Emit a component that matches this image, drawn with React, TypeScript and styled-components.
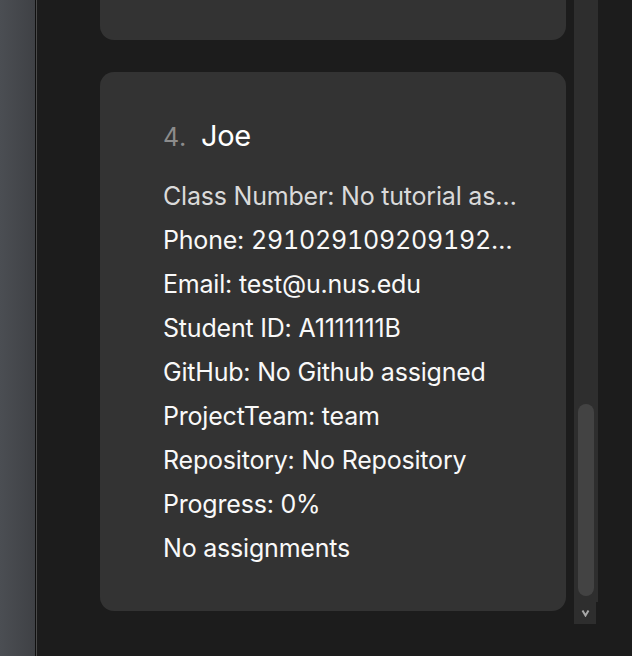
import React from "react";
import styled, { createGlobalStyle } from "styled-components";

const Global = createGlobalStyle`
  html, body { margin: 0; padding: 0; background: #1c1c1c; }
  body { font-family: Inter, "Noto Sans", sans-serif; }
`;

const Shell = styled.div`
  display: flex;
  height: 656px;
  width: 632px;
  overflow: hidden;
  background: #1c1c1c;
`;

const Sidebar = styled.div`
  width: 35px;
  flex: none;
  background: linear-gradient(to right, #4b4e53, #3f4145);
  border-right: 1px solid #101010;
  box-shadow: 1px 0 0 #4a4a4a;
`;

const Main = styled.div`
  flex: 1;
  display: flex;
  padding-left: 64px;
  gap: 8px;
`;

const Feed = styled.div`
  width: 466px;
  flex: none;
  overflow: hidden;
`;

const List = styled.div`
  display: flex;
  flex-direction: column;
  gap: 32px;
  margin-top: -499px;
`;

const Card = styled.div`
  background: #333333;
  border-radius: 14px;
  height: 539px;
  box-sizing: border-box;
  padding: 46px 40px 0 63px;
`;

const Header = styled.div`
  display: flex;
  align-items: baseline;
  gap: 15px;
  height: 36px;
  margin-bottom: 20px;
`;

const Index = styled.span`
  color: #8c8c8c;
  font-size: 25px;
  font-variant-numeric: tabular-nums;
`;

const Name = styled.span`
  color: #ffffff;
  font-size: 29px;
  letter-spacing: -0.3px;
`;

const Line = styled.div<{ $muted?: boolean }>`
  color: ${(p) => (p.$muted ? "#dadada" : "#f9f9f9")};
  font-size: 25px;
  line-height: 44px;
  letter-spacing: -0.2px;
  width: 357px;
  white-space: nowrap;
  overflow: hidden;
  text-overflow: ellipsis;
`;

const Value = styled.span<{ $tabular?: boolean }>`
  font-variant-numeric: ${(p) => (p.$tabular ? "tabular-nums" : "normal")};
`;

const Rail = styled.div`
  width: 24px;
  flex: none;
  display: flex;
  flex-direction: column;
`;

const Track = styled.div`
  position: relative;
  height: 602px;
  background: #2e2e2e;
`;

const Thumb = styled.div`
  position: absolute;
  left: 4px;
  right: 4px;
  top: 404px;
  height: 192px;
  border-radius: 8px;
  background: #434343;
`;

const ArrowButton = styled.div`
  width: 22px;
  height: 22px;
  background: #2e2e2e;
  display: flex;
  align-items: center;
  justify-content: center;
`;

type Field = { label?: string; value: string; tabular?: boolean };

const fields: Field[] = [
  { label: "Class Number", value: "No tutorial assigned" },
  { label: "Phone", value: "2910291092091920192", tabular: true },
  { label: "Email", value: "test@u.nus.edu" },
  { label: "Student ID", value: "A1111111B" },
  { label: "GitHub", value: "No Github assigned" },
  { label: "ProjectTeam", value: "team" },
  { label: "Repository", value: "No Repository" },
  { label: "Progress", value: "0%" },
  { value: "No assignments" },
];

export default function App() {
  return (
    <>
      <Global />
      <Shell>
        <Sidebar />
        <Main>
          <Feed>
            <List>
              <Card />
              <Card>
                <Header>
                  <Index>4.</Index>
                  <Name>Joe</Name>
                </Header>
                {fields.map((f, i) => (
                  <Line key={f.value} $muted={i === 0}>
                    {f.label ? `${f.label}: ` : ""}
                    <Value $tabular={f.tabular}>{f.value}</Value>
                  </Line>
                ))}
              </Card>
            </List>
          </Feed>
          <Rail>
            <Track>
              <Thumb />
            </Track>
            <ArrowButton>
              <svg width="9" height="8" viewBox="0 0 9 8">
                <path d="M1.5 1.5 L4.5 6.5 L7.5 1.5" stroke="#a8a8a8" strokeWidth="2" fill="none" />
              </svg>
            </ArrowButton>
          </Rail>
        </Main>
      </Shell>
    </>
  );
}
